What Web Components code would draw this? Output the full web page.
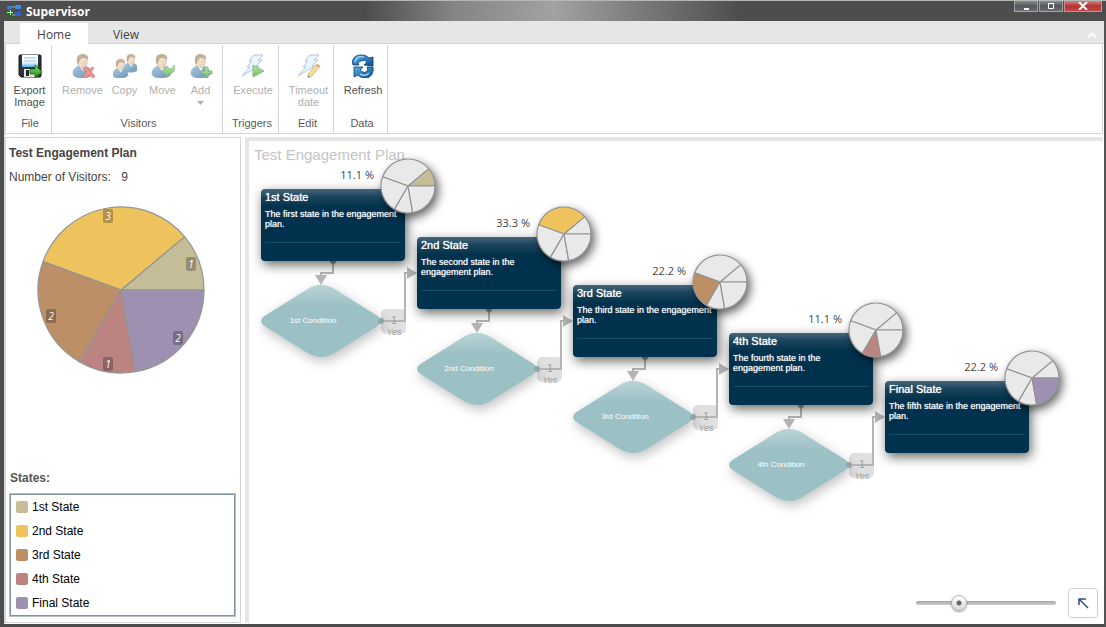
<!DOCTYPE html>
<html lang="en">
<head>
<meta charset="utf-8">
<title>Supervisor</title>
<style>
  html, body { margin: 0; }
  body { font: 11px/12px "Liberation Sans", Arial, sans-serif; color: #444; background: #4d4d4d; }
</style>
</head>
<body>
<app-window heading="Supervisor">
  <ribbon-bar slot="ribbon">
    <ribbon-group label="File" style="--w:46px;--pad:2px">
      <ribbon-button label="Export Image" icon="save" style="--w:44px"></ribbon-button>
    </ribbon-group>
    <ribbon-group label="Visitors" style="--w:171px">
      <ribbon-button label="Remove" icon="remove" disabled style="--w:46px"></ribbon-button>
      <ribbon-button label="Copy" icon="copy" disabled style="--w:38px"></ribbon-button>
      <ribbon-button label="Move" icon="move" disabled style="--w:38px"></ribbon-button>
      <ribbon-button label="Add" icon="add" disabled menu style="--w:38px"></ribbon-button>
    </ribbon-group>
    <ribbon-group label="Triggers" style="--w:56px">
      <ribbon-button label="Execute" icon="execute" disabled style="--w:50px"></ribbon-button>
    </ribbon-group>
    <ribbon-group label="Edit" style="--w:55px">
      <ribbon-button label="Timeout date" icon="timeout" disabled style="--w:46px"></ribbon-button>
    </ribbon-group>
    <ribbon-group label="Data" style="--w:54px">
      <ribbon-button label="Refresh" icon="refresh" style="--w:46px"></ribbon-button>
    </ribbon-group>
  </ribbon-bar>
  <summary-panel slot="side" heading="Test Engagement Plan" visitors="9"></summary-panel>
  <plan-canvas slot="main" heading="Test Engagement Plan"></plan-canvas>
</app-window>

<script>
const STATES = [
  { name: "1st State",   color: "#c5bd97", visitors: 1, share: "11.1 %", text: "The first state in the engagement plan.",  condition: "1st Condition" },
  { name: "2nd State",   color: "#eec35e", visitors: 3, share: "33.3 %", text: "The second state in the engagement plan.", condition: "2nd Condition" },
  { name: "3rd State",   color: "#bc8f67", visitors: 2, share: "22.2 %", text: "The third state in the engagement plan.",  condition: "3rd Condition" },
  { name: "4th State",   color: "#bb8480", visitors: 1, share: "11.1 %", text: "The fourth state in the engagement plan.", condition: "4th Condition" },
  { name: "Final State", color: "#9e90b0", visitors: 2, share: "22.2 %", text: "The fifth state in the engagement plan." }
];

const person = `
  <path d="M1 20c0-5 3-7 6-8l6 0c4 1 7 4 7 8-1 5-18 6-19 0z" fill="url(#suit)" stroke="#3f6f9c" stroke-width=".6"/>
  <path d="M7 12l4 5 3-5-1-3H8z" fill="#f7efe0"/>
  <ellipse cx="10.500" cy="7.500" rx="4.800" ry="6.500" fill="url(#skin)" stroke="#a48a67" stroke-width=".5"/>
  <path d="M5 8C4 2 7 0 11 0c4 0 6 3 5 6-2-2-4-2-6-2-2 1-2 3-3 5 0 2-2 2-2-1z" fill="#9a7d58"/>`;
const bolt = `<path d="M13 1h9l-5 5h4l-6 6h3L1 22l8-9H6l5-6H8z" fill="url(#boltfill)" stroke="#6fa3da" stroke-width="1"/>`;
const defs = `<defs>
  <linearGradient id="suit" x1="0" y1="0" x2="1" y2="1"><stop offset="0" stop-color="#6aa3d0"/><stop offset="1" stop-color="#0d4a82"/></linearGradient>
  <linearGradient id="skin" x1="0" y1="0" x2="1" y2="1"><stop offset="0" stop-color="#fbe6c6"/><stop offset="1" stop-color="#d5ac78"/></linearGradient>
  <linearGradient id="boltfill" x1="0" y1="0" x2="1" y2="1"><stop offset="0" stop-color="#ffffff"/><stop offset="1" stop-color="#b9dcf8"/></linearGradient>
  <linearGradient id="green" x1="0" y1="0" x2="0" y2="1"><stop offset="0" stop-color="#8be05e"/><stop offset="1" stop-color="#1f8a1b"/></linearGradient>
  <linearGradient id="blue" x1="0" y1="0" x2="1" y2="1"><stop offset="0" stop-color="#55b1ea"/><stop offset="1" stop-color="#0b4f8e"/></linearGradient>
  <linearGradient id="sheet" x1="0" y1="0" x2="0" y2="1"><stop offset="0" stop-color="#fff"/><stop offset=".6" stop-color="#f0f8ff"/><stop offset="1" stop-color="#5aaee8"/></linearGradient>
</defs>`;
const ICONS = {
  save: `<path d="M1 2q0-1 1-1h20q1 0 1 1v20q0 1-1 1H3l-2-2z" fill="#2e3338" stroke="#15181b"/>
    <path d="M4 1h16v12H4z" fill="url(#sheet)"/><path d="M6 4h12M6 7h12" stroke="#9ec3e6"/>
    <path d="M6 15h11v8H6z" fill="#e4e6e8"/><path d="M8 16h3v6H8z" fill="#24282c"/>
    <path d="M12 15h5v-4l7 7-7 6v-4h-5z" fill="url(#green)" stroke="#166a13" stroke-width=".8"/>`,
  remove: `<g transform="translate(1 0)">${person}</g><path d="M12 14l3-1 3 3 3-3 2 1-3 4 4 4-2 2-4-3-4 3-2-2 4-4-4-3z" fill="#ee4a3c" stroke="#b92a20" stroke-width=".7"/>`,
  copy: `<g transform="translate(10 0) scale(.76)">${person}</g><g transform="translate(-1 5) scale(.8)">${person}</g>`,
  move: `${person}<path d="M11 17l6-5v3c3 0 5-1 6-4 2 5-1 9-6 9v3z" fill="url(#green)" stroke="#3d9431" stroke-width=".8"/>`,
  add: `<g transform="translate(1 0)">${person}</g><path d="M16 13h3v4h4v3h-4v4h-3v-4h-4v-3h4z" fill="url(#green)" stroke="#1b7a18" stroke-width=".8"/>`,
  execute: `${bolt}<path d="M12 11l11 6-11 6z" fill="url(#green)" stroke="#2b8b28" stroke-width=".9"/>`,
  timeout: `${bolt}<path d="M20 10l3 2-8 10-4 2 0-4z" fill="#f5cc4d" stroke="#a8792a" stroke-width=".8"/><path d="M20 10l3 2-1 2-3-2z" fill="#dd6666"/><path d="M11 24v-3l2 2z" fill="#444"/>`,
  refresh: `<path d="M2 11C0 5 4 1 10 1c4 0 6 1 8 3l4-1v9l-9-1 3-3c-2-2-4-2-6-1-3 1-3 2-2 4z" fill="url(#blue)" stroke="#08396b" stroke-width=".8"/>
    <path d="M22 13c1 6-2 11-8 11-3 0-5-1-7-3l-4 2v-10h9l-3 3c2 2 4 3 6 2s2-3 1-5z" fill="url(#blue)" stroke="#08396b" stroke-width=".8"/>
    <path d="M4 8c1-4 4-6 9-5M9 20c3 2 6 2 9-1" fill="none" stroke="#a9dcfa" stroke-width="1.200"/>`
};
const icon = name => `<svg viewBox="0 0 24 24" width="24" height="24" aria-hidden="true">${defs}${ICONS[name]}</svg>`;

/* Slices run counter-clockwise from three o'clock, sized by visitor count. */
function pieSlices(radius, fillFor, labels) {
  const total = STATES.reduce((sum, s) => sum + s.visitors, 0);
  const at = (deg, r) => [Math.cos(deg * Math.PI / 180) * r, -Math.sin(deg * Math.PI / 180) * r].map(v => v.toFixed(2));
  let start = 0, slices = "", marks = "";
  STATES.forEach((s, i) => {
    const end = start + s.visitors / total * 360;
    slices += `<path d="M0 0L${at(start, radius)}A${radius} ${radius} 0 0 0 ${at(end, radius)}Z" fill="${fillFor(s, i)}"/>`;
    if (labels) {
      const [x, y] = at((start + end) / 2, radius * 0.9).map(v => Math.round(v));
      marks += `<rect x="${x - 5}" y="${y - 7}" width="10" height="14" rx="2" fill="#000" fill-opacity=".25"/>
        <text x="${x}" y="${y + 4}" text-anchor="middle">${s.visitors}</text>`;
    }
    start = end;
  });
  return `<g stroke="#949494" stroke-width="1.200" stroke-linejoin="round">${slices}</g>${marks}`;
}

class Base extends HTMLElement {
  connectedCallback() {
    if (this.shadowRoot) return;
    this.attachShadow({ mode: "open" }).innerHTML = `<style>:host{box-sizing:border-box}*{box-sizing:border-box}${this.css()}</style>${this.html()}`;
  }
  attr(name) { return this.getAttribute(name) || ""; }
}

customElements.define("app-window", class extends Base {
  css() { return `
    :host { display: flex; flex-direction: column; min-height: 100vh; background: #fff;
      border: solid #4d4d4d; border-width: 0 2px 3px 4px; border-right-color: #555;
      box-shadow: inset 1px 0 #d8d8d8; }
    header { display: flex; align-items: flex-start; height: 21px; margin-left: -4px; margin-right: -2px; border-top: 1px solid #b4b8b4;
      background: linear-gradient(90deg, #4d4d4d 33%, #848484 41%, #a2a2a2 50%, #4d4d4d 67%); }
    h1 { flex: 1; margin: 0; padding-left: 5px; font: bold 12px/21px "Open Sans", sans-serif; color: #fff; }
    .logo { margin: 3px 0 0 6px; }
    .buttons { display: flex; gap: 1px; margin-right: 4px; }
    .buttons button { width: 24px; height: 11px; padding: 0; border: 1px solid #a0a4a8; border-top: 0; display: grid; place-items: center;
      background: linear-gradient(#8a8e92, #53575b 50%, #6b7074); }
    .buttons .close { width: 38px; border-color: #c98d8d; background: linear-gradient(#d98080, #b23434 50%, #c24848); }
    main { flex: 1; display: grid; grid-template-columns: 236px minmax(0, 1fr); gap: 4px; padding: 3px 1px 1px; }
  `; }
  html() { return `
    <header>
      <svg class="logo" width="15" height="14" viewBox="0 0 15 14" aria-hidden="true">
        <path d="M4 5V3h5M4 8v3h5" fill="none" stroke="#9ab" />
        <rect x="1" y="2" width="5" height="4" rx="1" fill="#3b78d8"/><rect x="9" y="1" width="6" height="4" rx="1" fill="#3b8cf0"/><rect x="9" y="8" width="6" height="4" rx="1" fill="#2a62c8"/>
        <path d="M3 5h3v2h2v3H6v3H3v-3H0V7h3z" fill="#0a7a0a"/><path d="M4 6h1v2h2v1H5v2H4V9H1V8h3z" fill="#b8ffb0"/>
      </svg>
      <h1>${this.attr("heading")}</h1>
      <div class="buttons">
        <button aria-label="Minimize"><svg width="8" height="8" viewBox="0 0 8 8"><path d="M2 6h5v2H2z" fill="#fff"/></svg></button>
        <button aria-label="Maximize"><svg width="8" height="8" viewBox="0 0 8 8"><path d="M1.500 1.500h5v5h-5z" fill="none" stroke="#fff"/><path d="M1 1h6v1H1z" fill="#fff"/></svg></button>
        <button class="close" aria-label="Close"><svg width="10" height="8" viewBox="0 0 10 8"><path d="M1 0l8 8M9 0L1 8" stroke="#fff" stroke-width="2"/></svg></button>
      </div>
    </header>
    <slot name="ribbon"></slot>
    <main><slot name="side"></slot><slot name="main"></slot></main>`; }
});

customElements.define("ribbon-bar", class extends Base {
  css() { return `
    :host { display: block; }
    nav { display: flex; align-items: flex-end; height: 23px; padding-left: 16px; background: #e6e6e6; border-bottom: 1px solid #d5d5d5; }
    nav button { width: 68px; height: 21px; margin: 0 0 -1px; padding: 0; border: 0; background: none; font: 12px/24px "Open Sans", sans-serif; color: #444; text-align: center; }
    nav button[aria-selected=true] { background: #fff; }
    nav button + button { width: 76px; }
    nav .fold { width: 16px; margin-left: auto; height: 18px; margin-right: 4px; line-height: 1; }
    .groups { display: flex; height: 90px; margin: 0 1px; padding-top: 1px; border: solid #d5d5d5; border-width: 0 1px 1px; }
  `; }
  html() { return `
    <nav><button aria-selected="true">Home</button><button>View</button>
      <button class="fold" aria-label="Minimize ribbon"><svg width="10" height="8" viewBox="0 0 10 8"><path d="M1 7V4l4-3 4 3v3L5 5z" fill="#fafafa"/></svg></button></nav>
    <div class="groups"><slot></slot></div>`; }
});

customElements.define("ribbon-group", class extends Base {
  css() { return `
    :host { display: flex; flex-direction: column; width: var(--w); flex: none; padding-bottom: 1px; border-right: 1px solid #d5d5d5; }
    .items { flex: 1; display: flex; justify-content: center; padding-left: var(--pad, 5px); }
    .label { height: 15px; text-align: center; color: #5a5a5a; padding-left: 3px; }
  `; }
  html() { return `<div class="items"><slot></slot></div><div class="label">${this.attr("label")}</div>`; }
});

customElements.define("ribbon-button", class extends Base {
  css() { return `
    :host { display: block; width: var(--w); flex: none; }
    button { display: flex; flex-direction: column; align-items: center; width: 100%; padding: 9px 0 0; border: 0; background: none;
      font: inherit; line-height: 12px; color: #505050; text-align: center; }
    button:disabled { color: #b0b0b0; }
    svg { display: block; }
    button > svg:first-child { margin-bottom: 6px; }
    button:disabled > svg:first-child { opacity: .6; }
    .arrow { margin-top: 5px; }
  `; }
  html() { return `<button ${this.hasAttribute("disabled") ? "disabled" : ""}>${icon(this.attr("icon"))}<span>${this.attr("label")}</span>
    ${this.hasAttribute("menu") ? `<svg class="arrow" width="7" height="4" viewBox="0 0 7 4"><path d="M0 0h7L3.500 4z" fill="#b0b0b0"/></svg>` : ""}</button>`; }
});

customElements.define("summary-panel", class extends Base {
  css() { return `
    :host { display: flex; flex-direction: column; padding: 7px 4px 5px 3px; border: 1px solid #d5d5d5; }
    h2, h3 { margin: 0; font: bold 12px/16px "Liberation Sans", Arial, sans-serif; color: #444; }
    p { margin: 8px 0 0; font-size: 12px; line-height: 16px; }
    b { font-weight: normal; margin-left: 7px; }
    visitor-pie { margin: 20px 0 20px 27px; }
    h3 { margin: auto 0 7px 1px; color: #555; }
  `; }
  html() { return `<h2>${this.attr("heading")}</h2><p>Number of Visitors: <b>${this.attr("visitors")}</b></p>
    <visitor-pie></visitor-pie><h3>States:</h3><state-legend></state-legend>`; }
});

customElements.define("visitor-pie", class extends Base {
  css() { return `:host { display: block; } svg { display: block; } text { font: italic 10px "Open Sans", sans-serif; fill: #fff; }`; }
  html() { return `<svg width="170" height="170" viewBox="-85 -85 170 170" role="img" aria-label="Visitors per state">${pieSlices(83, s => s.color, true)}</svg>`; }
});

customElements.define("state-legend", class extends Base {
  css() { return `
    :host { display: block; }
    ul { margin: 0; padding: 1px 6px; list-style: none; border: 1px solid #adc0cc; box-shadow: inset 0 0 0 1px #7e94a3; }
    li { display: flex; align-items: center; gap: 4px; height: 24px; font-size: 12px; color: #000; }
    i { width: 12px; height: 12px; border-radius: 2px; }
  `; }
  html() { return `<ul>${STATES.map(s => `<li><i style="background:${s.color}"></i>${s.name}</li>`).join("")}</ul>`; }
});

customElements.define("plan-canvas", class extends Base {
  css() { return `
    :host { display: flex; flex-direction: column; position: relative; border: solid #e6e6e6; border-width: 4px 0 0 4px; overflow: hidden; }
    h2 { margin: 0; padding: 5px 5px 0; font: 15px/18px "Liberation Sans", Arial, sans-serif; color: #c4c4c4; }
    plan-state, plan-condition { position: absolute; left: calc(12px + 156px * var(--i)); top: calc(48px + 48px * var(--i)); }
    plan-condition { margin-top: 72px; }
    zoom-bar { margin: auto 5px 5px auto; }
  `; }
  html() {
    return `<h2>${this.attr("heading")}</h2>
      ${STATES.map((s, i) => s.condition ? `<plan-condition style="--i:${i}" index="${i}"></plan-condition>` : "").join("")}
      ${STATES.map((s, i) => `<plan-state style="--i:${i}" index="${i}"></plan-state>`).join("")}
      <zoom-bar></zoom-bar>`;
  }
});

customElements.define("plan-state", class extends Base {
  css() { return `
    :host { display: block; width: 144px; height: 72px; padding: 2px 4px; border-radius: 4px; color: #fff;
      background: linear-gradient(#45697f, #1c445c 8px, #01324d 18px); box-shadow: 2px 4px 12px rgba(0,0,0,.6); }
    h3 { margin: 0 0 5px; font: 11px/13px "Liberation Sans", Arial, sans-serif; text-shadow: 0 0 1px #fff; }
    p { margin: 0; width: 136px; height: 34px; font-size: 9px; line-height: 10px; text-shadow: 0 0 1px rgba(255,255,255,.8); border-bottom: 1px solid #1c4a62; }
    .share { position: absolute; right: 31px; top: -22px; font: 11px/16px "Open Sans", sans-serif; color: #444; white-space: nowrap; }
    svg { position: absolute; left: 117px; top: -33px; overflow: visible; filter: drop-shadow(3px 4px 5px rgba(0,0,0,.6)); }
  `; }
  html() {
    const n = +this.attr("index"), s = STATES[n];
    return `<h3>${s.name}</h3><p>${s.text}</p><span class="share">${s.share}</span>
      <svg width="60" height="60" viewBox="-30 -30 60 60" aria-hidden="true">${pieSlices(27, (_, i) => i === n ? s.color : "#e9e9e9", false)}</svg>`;
  }
});

customElements.define("plan-condition", class extends Base {
  css() { return `
    :host { display: block; width: 160px; height: 100px; }
    svg { display: block; overflow: visible; }
    .shape { filter: drop-shadow(2px 4px 6px rgba(0,0,0,.25)); }
    .name { font: 8px "Liberation Sans", Arial, sans-serif; fill: #fff; }
    .one { font: 10px "Liberation Sans", Arial, sans-serif; fill: #999; }
    .yes { font: italic 9px "Liberation Sans", Arial, sans-serif; fill: #999; }
  `; }
  html() {
    const s = STATES[+this.attr("index")];
    return `<svg width="160" height="100" viewBox="0 0 160 100">
      <defs><linearGradient id="glass" x1="0" y1="0" x2="0" y2="1"><stop offset="0" stop-color="#b9d3d6"/><stop offset=".3" stop-color="#9cc1c5"/><stop offset="1" stop-color="#9cc1c5"/></linearGradient></defs>
      <path class="shape" d="M45 29Q60 19 75 29L115 54Q125 60 115 66L75 91Q60 101 45 91L5 66Q-5 60 5 54z" fill="url(#glass)"/>
      <text class="name" x="52" y="62" text-anchor="middle">${s.condition}</text>
      <rect x="120" y="48" width="25" height="25" rx="5" fill="#000" fill-opacity=".12"/>
      <path d="M72 0v12H60v5M120 60h24V12h3" fill="none" stroke="#b5b5b5" stroke-width="2"/>
      <path d="M54 14h12l-6 10zM146 6v12l10-6z" fill="#b5b5b5"/>
      <path d="M69 0h6a3 3 0 0 1-6 0z" fill="#999"/><circle cx="120" cy="60" r="3" fill="#8fa5a7"/>
      <text class="one" x="133" y="63" text-anchor="middle">1</text>
      <text class="yes" x="133" y="74" text-anchor="middle">Yes</text>
    </svg>`;
  }
});

customElements.define("zoom-bar", class extends Base {
  css() { return `
    :host { display: flex; align-items: center; gap: 12px; }
    input { appearance: none; width: 140px; height: 20px; margin: 0; background: none; }
    input::-webkit-slider-runnable-track { height: 4px; border-radius: 2px; background: linear-gradient(#a4a4a4, #d0d0d0); }
    input::-webkit-slider-thumb { appearance: none; width: 16px; height: 16px; margin-top: -6px; border: 1px solid #b5b5b5; border-radius: 50%;
      background: radial-gradient(circle, #666 2px, transparent 3px), linear-gradient(#fff, #d8d8d8); box-shadow: 0 1px 2px rgba(0,0,0,.4); }
    button { width: 30px; height: 30px; padding: 0; display: grid; place-items: center; border: 1px solid #d0d0d0; border-radius: 4px; background: #fff; }
  `; }
  html() { return `<input type="range" min="0" max="100" value="28" aria-label="Zoom">
    <button aria-label="Fit to view"><svg width="12" height="12" viewBox="0 0 12 12"><path d="M2 8V2h7M2 2l9 9" fill="none" stroke="#33507f" stroke-width="1.500"/></svg></button>`; }
});
</script>
</body>
</html>
